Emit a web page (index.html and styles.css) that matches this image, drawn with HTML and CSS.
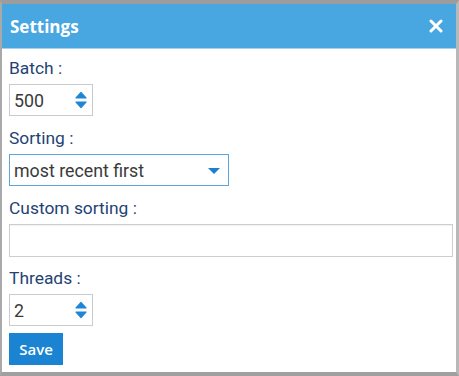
FILE: index.html
```html
<!DOCTYPE html>
<html lang="en">
<head>
  <meta charset="UTF-8" />
  <meta name="viewport" content="width=device-width, initial-scale=1.0"/>
  <title>Settings</title>
  <link rel="stylesheet" href="styles.css">
</head>
<body>

  <div class="dialog">
    <!-- Titelrad -->
    <div class="dialog-header">
      <span class="dialog-title">Settings</span>
      <svg class="close-icon" width="14" height="14" viewBox="0 0 14 14">
        <path d="M2 2 L12 12 M12 2 L2 12" stroke="#fff" stroke-width="3" stroke-linecap="round" fill="none"/>
      </svg>
    </div>

    <div class="dialog-body">
      <label class="field-label" for="batch">Batch :</label>
      <div class="spin-box">
        <input type="number" id="batch" value="500">
        <svg class="spin-icon" width="14" height="24" viewBox="0 0 14 24">
          <path d="M2 10 L7 4.5 L12 10 Z" fill="#1f86d6" stroke="#1f86d6" stroke-width="1.2" stroke-linejoin="round"/>
          <path d="M2 14 L7 19.5 L12 14 Z" fill="#1f86d6" stroke="#1f86d6" stroke-width="1.2" stroke-linejoin="round"/>
        </svg>
      </div>

      <label class="field-label" for="sorting">Sorting :</label>
      <div class="select-box">
        <select id="sorting">
          <option>most recent first</option>
          <option>oldest first</option>
        </select>
        <svg class="caret-icon" width="14" height="8" viewBox="0 0 14 8">
          <path d="M1 1 L13 1 L7 7 Z" fill="#1b7fd0"/>
        </svg>
      </div>

      <label class="field-label" for="custom">Custom sorting :</label>
      <input type="text" id="custom" class="text-input">

      <label class="field-label" for="threads">Threads :</label>
      <div class="spin-box">
        <input type="number" id="threads" value="2">
        <svg class="spin-icon" width="14" height="24" viewBox="0 0 14 24">
          <path d="M2 10 L7 4.5 L12 10 Z" fill="#1f86d6" stroke="#1f86d6" stroke-width="1.2" stroke-linejoin="round"/>
          <path d="M2 14 L7 19.5 L12 14 Z" fill="#1f86d6" stroke="#1f86d6" stroke-width="1.2" stroke-linejoin="round"/>
        </svg>
      </div>

      <button class="save-button">Save</button>
    </div>
  </div>

</body>
</html>
```

FILE: styles.css
```css
body {
  margin: 0;
  font-family: Roboto, 'Liberation Sans', sans-serif;
  background-color: #fff;
}

.dialog {
  box-sizing: border-box;
  width: 459px;
  height: 376px;
  border-top: 4px solid #9c9c9c;
  border-left: 2px solid #a9a9a9;
  border-right: 3px solid #b8b8b8;
  border-bottom: 4px solid #a0a0a0;
  background-color: #fff;
}

.dialog-header {
  display: flex;
  justify-content: space-between;
  align-items: center;
  height: 44px;
  padding: 0 13px 0 8px;
  background-color: #48a7e1;
  border-bottom: 1px solid #a9cfec;
}

.dialog-title {
  font-family: 'Open Sans', sans-serif;
  font-weight: bold;
  font-size: 17px;
  color: #fff;
}

.close-icon {
  display: block;
}

.dialog-body {
  display: flex;
  flex-direction: column;
  align-items: flex-start;
  padding: 9px 4px 0 7px;
}

.field-label {
  display: block;
  height: 20px;
  line-height: 20px;
  font-size: 17.4px;
  color: #1f4374;
  margin-bottom: 6px;
}

.spin-box {
  position: relative;
  margin-bottom: 12px;
}

.spin-box input {
  box-sizing: border-box;
  width: 84px;
  height: 32px;
  padding: 0 0 0 4px;
  border: 1px solid #cbcbcb;
  font-family: Roboto, sans-serif;
  font-size: 17.8px;
  color: #3a3a3a;
  -moz-appearance: textfield;
}

.spin-box input::-webkit-inner-spin-button,
.spin-box input::-webkit-outer-spin-button {
  -webkit-appearance: none;
  margin: 0;
}

.spin-icon {
  position: absolute;
  top: 4px;
  left: 65px;
}

.select-box {
  position: relative;
  margin-bottom: 12px;
}

.select-box select {
  box-sizing: border-box;
  width: 220px;
  height: 32px;
  padding: 0 0 0 4px;
  border: 1px solid #5ea5dc;
  border-radius: 0;
  background-color: #fff;
  font-family: Roboto, sans-serif;
  font-size: 17.8px;
  color: #3a3a3a;
  -webkit-appearance: none;
  appearance: none;
}

.caret-icon {
  position: absolute;
  top: 13px;
  left: 198px;
}

.text-input {
  box-sizing: border-box;
  width: 444px;
  height: 33px;
  border: 1px solid #cdcdcd;
  box-shadow: inset 0 1px 1px rgba(0, 0, 0, 0.06);
  margin-bottom: 11px;
}

.save-button {
  margin-top: -5px;
  width: 54px;
  height: 32px;
  border: none;
  background-color: #1a84d3;
  color: #fff;
  font-family: 'Open Sans', sans-serif;
  font-weight: 600;
  font-size: 15px;
  padding: 0;
}
```
